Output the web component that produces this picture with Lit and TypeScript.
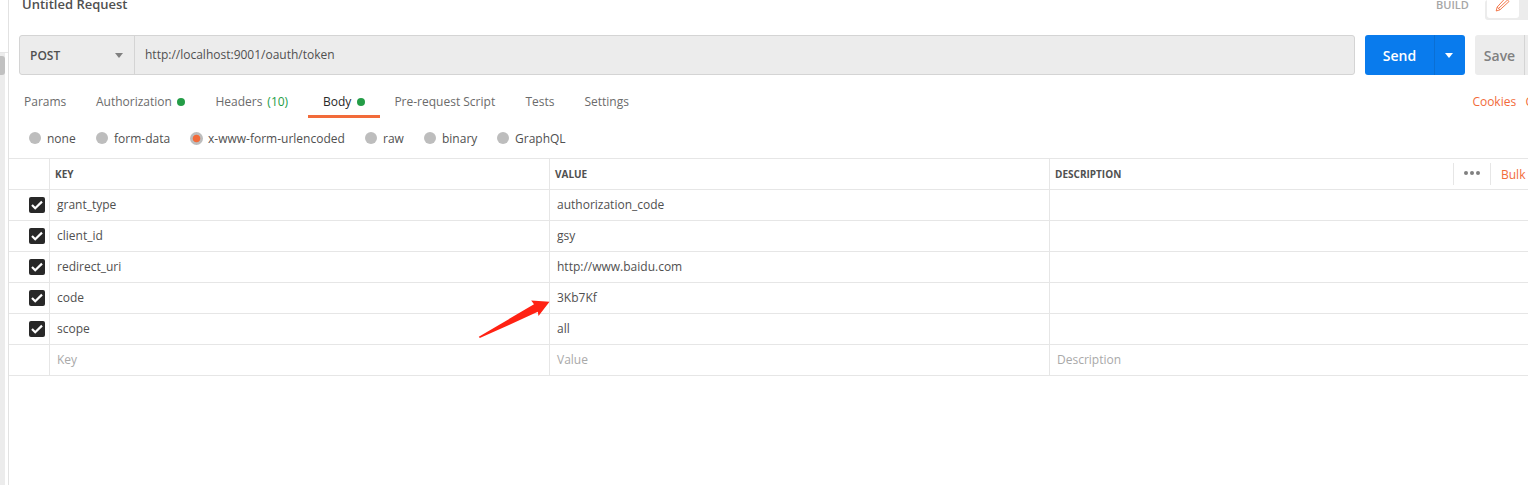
import { LitElement, html, css, nothing } from "lit";
import { customElement } from "lit/decorators.js";
import { classMap } from "lit/directives/class-map.js";

interface Tab { name: string; cls: string; dot?: boolean; count?: string; active?: boolean }

const TABS: Tab[] = [
  { name: "Params", cls: "t-params" },
  { name: "Authorization", cls: "t-auth", dot: true },
  { name: "Headers", cls: "t-headers", count: "(10)" },
  { name: "Body", cls: "t-body", dot: true, active: true },
  { name: "Pre-request Script", cls: "t-pre" },
  { name: "Tests", cls: "t-tests" },
  { name: "Settings", cls: "t-settings" },
];

const MODES = [
  { name: "none", cls: "m-none" },
  { name: "form-data", cls: "m-form" },
  { name: "x-www-form-urlencoded", cls: "m-url", selected: true },
  { name: "raw", cls: "m-raw" },
  { name: "binary", cls: "m-binary" },
  { name: "GraphQL", cls: "m-graphql" },
];

const ROWS = [
  ["grant_type", "authorization_code"],
  ["client_id", "gsy"],
  ["redirect_uri", "http://www.baidu.com"],
  ["code", "3Kb7Kf"],
  ["scope", "all"],
];

@customElement("app-root")
export class AppRoot extends LitElement {
  static styles = css`
    :host {
      display: flex;
      position: relative;
      width: 1528px;
      height: 485px;
      overflow: hidden;
      background: #fff;
      color: #505050;
      font: 12px/18px "Open Sans", sans-serif;
      white-space: nowrap;
    }
    * { box-sizing: border-box; }
    svg { display: block; flex: none; }
    .side { width: 9px; flex: none; border-right: 1px solid #e2e2e2; }
    .side-top { height: 53px; border-bottom: 1px solid #e6e6e6; }
    .track { width: 5px; height: 432px; padding-top: 3px; background: #ececec; }
    .thumb { height: 19px; background: #c1c1c1; border-radius: 0 3px 3px 0; }
    .main { width: 1519px; flex: none; display: flex; flex-direction: column; }

    .title-bar { display: flex; height: 35px; padding-left: 13px; line-height: 9px; }
    .title { flex: none; width: 1414px; font-size: 13px; font-weight: 600; }
    .build { flex: none; width: 49px; font-size: 11px; font-weight: 600; color: #a6a6a6; line-height: 10px; }
    .switch { flex: none; width: 60px; height: 20px; padding: 0 2px 2px; background: #ececec; border-radius: 3px; }
    .switch-on { width: 32px; height: 18px; padding-left: 8px; background: #fff; border-radius: 0 0 3px 3px; }

    .url-bar { display: flex; height: 40px; padding-left: 10px; }
    .field { display: flex; width: 1336px; flex: none; border: 1px solid #d4d4d4; border-radius: 3px; background: #ececec; }
    .method { display: flex; align-items: center; width: 115px; padding: 1px 11px 0 10px; border-right: 1px solid #d4d4d4; justify-content: space-between; font-weight: 600; }
    .url { padding: 10px 0 0 10px; }
    .send { display: flex; flex: none; width: 100px; margin-left: 10px; background: #097bed; border-radius: 3px; color: #fff; font-size: 14px; font-weight: 600; line-height: 41px; }
    .send-label { width: 70px; text-align: center; border-right: 1px solid #0a6fd4; }
    .send-label, .save-label { flex: none; }
    .send-more { width: 30px; display: flex; align-items: center; justify-content: center; padding-right: 2px; }
    .save { display: flex; flex: none; width: 82px; margin-left: 10px; background: #ececec; border-radius: 3px; color: #808080; font-size: 14px; font-weight: 600; line-height: 41px; }
    .save-label { width: 50px; text-align: center; border-right: 1px solid #d4d4d4; }

    .tabs { display: flex; height: 43px; padding: 11px 0 0 15px; }
    .tab { display: flex; flex: none; height: 32px; padding-top: 7px; color: #6b6b6b; }
    .tab.active { color: #282828; border-bottom: 3px solid #f26b3a; }
    .dot { width: 8px; height: 8px; border-radius: 50%; background: #249d47; margin: 5px 0 0 5px; }
    .active .dot { margin-left: 6px; }
    .count { color: #249d47; margin-left: 5px; }
    .t-params { width: 72px; }
    .t-auth { width: 119.4px; }
    .t-headers { width: 92.6px; }
    .t-body { width: 72px; padding-left: 15px; margin-right: 14.4px; }
    .t-pre { width: 131px; }
    .t-tests { width: 59px; }
    .t-settings { width: 888px; }
    .link { flex: none; padding-top: 7px; color: #f26b3a; }
    .t-cookies { width: 53px; }

    .modes { display: flex; height: 40px; padding: 12px 0 0 20px; }
    .mode { display: flex; flex: none; gap: 6px; }
    .radio { width: 12px; height: 12px; margin-top: 2px; border-radius: 50%; background: #bdbdbd; flex: none; }
    .radio.on { width: 13px; height: 13px; margin-left: -1px; margin-right: -1px; background: radial-gradient(circle, #f26b3a 3.4px, #bdbdbd 4.2px); }
    .m-none { width: 67px; }
    .m-form { width: 95px; }
    .m-url { width: 174px; }
    .m-raw { width: 59px; }
    .m-binary { width: 73px; }

    .grid { border-top: 1px solid #e6e6e6; }
    .row { display: grid; grid-template-columns: 41px 500px 500px 478px; height: 31px; border-bottom: 1px solid #e6e6e6; }
    .cell { padding: 6px 0 0 7px; border-right: 1px solid #e6e6e6; }
    .cell:last-child { border-right: none; }
    .check { padding: 6px 0 0 19px; }
    .head .cell { padding-left: 5px; font-size: 10px; font-weight: 700; }
    .new .cell { color: #a9a9a9; }
    .desc-head { display: flex; }
    .desc-label { width: 398px; flex: none; }
    .more { display: flex; align-items: center; justify-content: center; width: 38px; height: 22px; margin-top: -2px; padding-bottom: 2px; border: solid #e6e6e6; border-width: 0 1px; flex: none; }
    .bulk { padding-left: 10px; margin-top: 1px; color: #f26b3a; font-size: 12px; font-weight: 400; }
    .arrow { position: absolute; left: 476px; top: 296px; }
  `;

  private check() {
    return html`<svg width="18" height="18" viewBox="0 0 18 18">
      <rect x="1" y="1" width="16" height="16" rx="2" fill="#282828"/>
      <path d="M4 9 7.2 12.2 14 5.6" fill="none" stroke="#fff" stroke-width="2.2"/>
    </svg>`;
  }

  render() {
    return html`
      <div class="side"><div class="side-top"></div><div class="track"><div class="thumb"></div></div></div>
      <div class="main">
        <div class="title-bar">
          <div class="title">Untitled Request</div>
          <div class="build">BUILD</div>
          <div class="switch"><div class="switch-on">
            <svg width="16" height="12" viewBox="0 0 16 12" fill="none" stroke="#f26b3a" stroke-width="0.9">
              <path d="M10.5 -2 14 1.5 5 9.8 1.2 11 2.2 7Z M2.2 7 5 9.8 M3.6 8.4 12.5 0"/>
            </svg>
          </div></div>
        </div>
        <div class="url-bar">
          <div class="field">
            <div class="method"><span>POST</span><svg width="8" height="5" viewBox="0 0 8 5"><path d="M0 0h8L4 5z" fill="#808080"/></svg></div>
            <div class="url">http://localhost:9001/oauth/token</div>
          </div>
          <div class="send"><div class="send-label">Send</div><div class="send-more"><svg width="8" height="5" viewBox="0 0 8 5"><path d="M0 0h8L4 5z" fill="#fff"/></svg></div></div>
          <div class="save"><div class="save-label">Save</div></div>
        </div>
        <div class="tabs">
          ${TABS.map(t => html`<div class=${classMap({ tab: true, [t.cls]: true, active: !!t.active })}>
            <span>${t.name}</span>${t.count ? html`<span class="count">${t.count}</span>` : nothing}${t.dot ? html`<i class="dot"></i>` : nothing}
          </div>`)}
          <div class="link t-cookies">Cookies</div><div class="link">Code</div>
        </div>
        <div class="modes">
          ${MODES.map(m => html`<div class=${classMap({ mode: true, [m.cls]: true })}>
            <i class=${classMap({ radio: true, on: !!m.selected })}></i><span>${m.name}</span>
          </div>`)}
        </div>
        <div class="grid">
          <div class="row head">
            <div class="cell"></div><div class="cell">KEY</div><div class="cell">VALUE</div>
            <div class="cell desc-head"><span class="desc-label">DESCRIPTION</span>
              <span class="more"><svg width="16" height="4" viewBox="0 0 16 4" fill="#808080"><circle cx="2" cy="2" r="2"/><circle cx="8" cy="2" r="2"/><circle cx="14" cy="2" r="2"/></svg></span>
              <span class="bulk">Bulk Edit</span></div>
          </div>
          ${ROWS.map(([k, v]) => html`<div class="row">
            <div class="cell check">${this.check()}</div><div class="cell">${k}</div><div class="cell">${v}</div><div class="cell"></div>
          </div>`)}
          <div class="row new"><div class="cell"></div><div class="cell">Key</div><div class="cell">Value</div><div class="cell">Description</div></div>
        </div>
      </div>
      <svg class="arrow" width="76" height="44" viewBox="0 0 76 44"><path d="M2.8 40.8 58 8.3 55.2 4.6 73.5 5.8 62.5 20 61.8 15.8 33 29 3.8 42Z" fill="#ff2213"/></svg>
    `;
  }
}
